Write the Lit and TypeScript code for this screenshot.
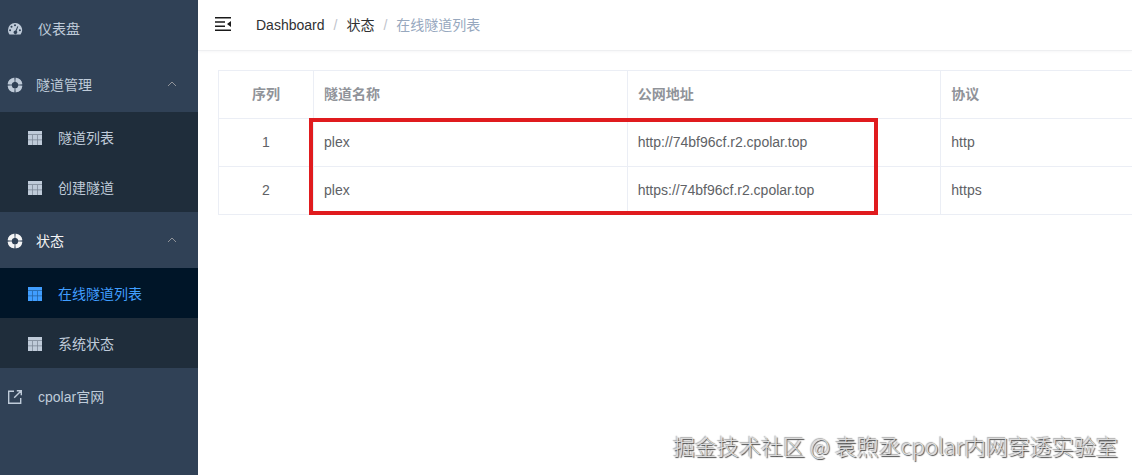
import { LitElement, html, css, svg, nothing } from "lit";
import { customElement, property, state } from "lit/decorators.js";
import { classMap } from "lit/directives/class-map.js";

const shapes = {
  dashboard: svg`<path fill-rule="evenodd" d="M7 1a7 7 0 0 0-7 7c0 1.600.5 3 1.300 4.200.2.200.4.300.7.300h10c.3 0 .5-.1.700-.3A7 7 0 0 0 7 1ZM7 2.200a1 1 0 1 1 0 2 1 1 0 0 1 0-2ZM3.500 3.700a1 1 0 1 1 0 2 1 1 0 0 1 0-2ZM2.100 7.300a1 1 0 1 1 0 2 1 1 0 0 1 0-2ZM11.900 7.300a1 1 0 1 1 0 2 1 1 0 0 1 0-2ZM9.400 4.200l.9.400-1.700 4.200a1.900 1.900 0 1 1-1.100-.4Z"/>`,
  ring: svg`<g fill="none" stroke="currentColor" stroke-width="4"><circle cx="7" cy="7" r="5.400" opacity=".35"/><path d="M7.700 1.650A5.400 5.400 0 0 1 12.350 6.300M12.350 7.700A5.400 5.400 0 0 1 7.700 12.350M6.300 12.350A5.400 5.400 0 0 1 1.650 7.700M1.650 6.300A5.400 5.400 0 0 1 6.300 1.650"/></g>`,
  grid: svg`<path opacity=".55" d="M0 3h14v11H0Z"/><path d="M0 0h14v3.300H0ZM0 4h4.300v4.600H0ZM5 4h4v4.600H5ZM9.700 4H14v4.600H9.700ZM0 9.200h4.300V14H0ZM5 9.200h4V14H5ZM9.700 9.200H14V14H9.700Z"/>`,
  link: svg`<path fill="none" stroke="currentColor" stroke-width="1.400" d="M6 1.300H.7v12h12V8M8.800.7h4.500v4.500M13 1 6.200 7.800"/>`,
};
type Shape = keyof typeof shapes;

interface Entry {
  label: string;
  icon: Shape;
  current?: boolean;
  children?: Entry[];
}

const menu: Entry[] = [
  { label: "仪表盘", icon: "dashboard" },
  {
    label: "隧道管理",
    icon: "ring",
    children: [
      { label: "隧道列表", icon: "grid" },
      { label: "创建隧道", icon: "grid" },
    ],
  },
  {
    label: "状态",
    icon: "ring",
    children: [
      { label: "在线隧道列表", icon: "grid", current: true },
      { label: "系统状态", icon: "grid" },
    ],
  },
  { label: "cpolar官网", icon: "link" },
];

@customElement("side-menu")
class SideMenu extends LitElement {
  @state() private closed: string[] = [];

  static styles = css`
    :host {
      display: block;
      background: #304156;
      color: #bfcbd9;
    }
    ul {
      list-style: none;
      margin: 0;
      padding: 0;
    }
    .row {
      box-sizing: border-box;
      display: flex;
      align-items: center;
      width: 100%;
      height: 56px;
      padding: 2px 20px 0 8px;
      border: 0;
      background: none;
      color: inherit;
      font: inherit;
      text-align: left;
      text-decoration: none;
      cursor: pointer;
    }
    .row.open-parent {
      color: #f4f4f5;
    }
    .icon {
      width: 14px;
      height: 14px;
      margin-right: 16px;
      flex: none;
      fill: currentColor;
      overflow: visible;
    }
    button .icon {
      margin-right: 14px;
    }
    .arrow {
      width: 12px;
      height: 12px;
      margin-left: auto;
      fill: none;
      stroke: #909399;
    }
    .sub {
      background: #1f2d3b;
    }
    .sub .row {
      height: 50px;
      padding-left: 28px;
    }
    .sub .row.current {
      background: #001528;
      color: #409eff;
    }
  `;

  private icon(shape: Shape) {
    return html`<svg class="icon" viewBox="0 0 14 14" aria-hidden="true">${shapes[shape]}</svg>`;
  }

  private toggle(label: string) {
    this.closed = this.closed.includes(label)
      ? this.closed.filter((name) => name !== label)
      : [...this.closed, label];
  }

  private entry(item: Entry): unknown {
    if (!item.children) {
      return html`<li>
        <a
          href="#"
          class=${classMap({ row: true, current: !!item.current })}
          aria-current=${item.current ? "page" : nothing}
          >${this.icon(item.icon)}<span>${item.label}</span></a
        >
      </li>`;
    }
    const open = !this.closed.includes(item.label);
    const active = item.children.some((child) => child.current);
    return html`<li>
      <button
        class=${classMap({ row: true, "open-parent": active })}
        aria-expanded=${open}
        @click=${() => this.toggle(item.label)}
      >
        ${this.icon(item.icon)}<span>${item.label}</span>
        <svg class="arrow" viewBox="0 0 12 12" aria-hidden="true">
          <path d=${open ? "M2 7l4-4 4 4" : "M2 4l4 4 4-4"} />
        </svg>
      </button>
      ${open ? html`<ul class="sub">${item.children.map((child) => this.entry(child))}</ul>` : nothing}
    </li>`;
  }

  render() {
    return html`<nav><ul>${menu.map((item) => this.entry(item))}</ul></nav>`;
  }
}

@customElement("tunnel-table")
class TunnelTable extends LitElement {
  @property({ attribute: false }) rows: string[][] = [];

  static styles = css`
    :host {
      display: block;
      position: relative;
    }
    table {
      width: 100%;
      min-width: 1037px;
      table-layout: fixed;
      border-collapse: separate;
      border-spacing: 0;
      border-top: 1px solid #ebeef5;
      border-left: 1px solid #ebeef5;
      color: #606266;
    }
    .index {
      width: 95px;
      text-align: center;
    }
    th,
    td {
      box-sizing: border-box;
      height: 48px;
      padding: 0 10px 2px;
      border-right: 1px solid #ebeef5;
      border-bottom: 1px solid #ebeef5;
      text-align: left;
    }
    th {
      color: #909399;
      font-weight: 700;
    }
    .mark {
      position: absolute;
      box-sizing: border-box;
      left: 91px;
      top: 48px;
      width: 569px;
      height: 97px;
      border: 4px solid #e01b1e;
      pointer-events: none;
    }
  `;

  render() {
    return html`<table>
        <thead>
          <tr>
            <th class="index" scope="col">序列</th>
            <th scope="col">隧道名称</th>
            <th scope="col">公网地址</th>
            <th scope="col">协议</th>
          </tr>
        </thead>
        <tbody>
          ${this.rows.map(
            (row) => html`<tr>
              ${row.map((cell, i) => html`<td class=${i === 0 ? "index" : nothing}>${cell}</td>`)}
            </tr>`
          )}
        </tbody>
      </table>
      <div class="mark"></div>`;
  }
}

@customElement("app-root")
class AppRoot extends LitElement {
  static styles = css`
    :host {
      position: relative;
      display: grid;
      grid-template-columns: 198px minmax(0, 1fr);
      min-height: 100vh;
      background: #fff;
      font: 14px/20px "Liberation Sans", "Noto Sans CJK SC", sans-serif;
    }
    header {
      display: flex;
      align-items: center;
      box-sizing: border-box;
      height: 51px;
      padding-left: 16px;
      border-bottom: 1px solid #eeeff1;
      box-shadow: 0 1px 3px rgba(0, 21, 41, 0.04);
    }
    .fold {
      display: flex;
      padding: 0 0 2px;
      border: 0;
      background: none;
      color: #1a1a1a;
      cursor: pointer;
    }
    .fold svg {
      width: 18px;
      height: 16px;
      fill: currentColor;
    }
    ol {
      display: flex;
      list-style: none;
      margin: 0 0 0 24px;
      padding: 0;
      color: #97a8be;
    }
    ol a {
      color: #303133;
      text-decoration: none;
    }
    li + li::before {
      content: "/";
      margin: 0 9px;
      color: #c0c4cc;
    }
    .content {
      padding: 19px 0 0 20px;
      overflow: hidden;
    }
    .watermark {
      position: absolute;
      right: 14px;
      bottom: 14px;
      color: #dcdcdc;
      font: 22px/32px "Noto Sans CJK SC", sans-serif;
      font-weight: 300;
      text-shadow: 1px 1px 1px #444, -1px -1px 1px #aaa;
      white-space: nowrap;
    }
  `;

  private rows = [
    ["1", "plex", "http://74bf96cf.r2.cpolar.top", "http"],
    ["2", "plex", "https://74bf96cf.r2.cpolar.top", "https"],
  ];

  render() {
    return html`<side-menu></side-menu>
      <main>
        <header>
          <button class="fold" aria-label="Toggle menu">
            <svg viewBox="0 0 18 16" aria-hidden="true">
              <path d="M1 1h16v1.500H1ZM1 5.200h10v1.500H1ZM1 9.400h10v1.500H1ZM1 13.500h16V15H1ZM17 5v6l-4-3Z" />
            </svg>
          </button>
          <ol>
            <li><a href="#">Dashboard</a></li>
            <li><a href="#">状态</a></li>
            <li>在线隧道列表</li>
          </ol>
        </header>
        <div class="content"><tunnel-table .rows=${this.rows}></tunnel-table></div>
      </main>
      <div class="watermark">掘金技术社区 @ 袁煦丞cpolar内网穿透实验室</div>`;
  }
}
